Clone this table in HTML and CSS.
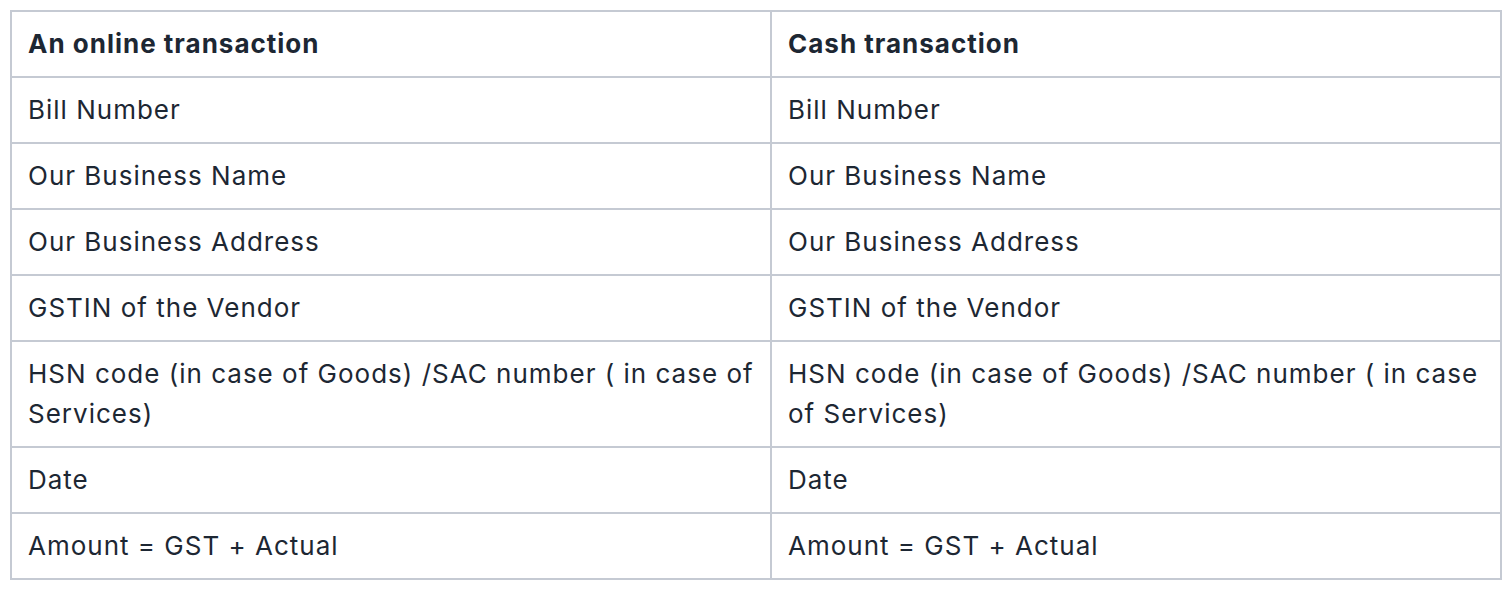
FILE: index.html
```html
<!DOCTYPE html>
<html>
<head>
<meta charset="utf-8">
<link rel="stylesheet" href="styles.css">
</head>
<body>
<table class="grid">
  <colgroup><col class="c1"><col class="c2"></colgroup>
  <thead>
    <tr><th>An online transaction</th><th>Cash transaction</th></tr>
  </thead>
  <tbody>
    <tr><td>Bill Number</td><td>Bill Number</td></tr>
    <tr><td>Our Business Name</td><td>Our Business Name</td></tr>
    <tr><td>Our Business Address</td><td>Our Business Address</td></tr>
    <tr><td>GSTIN of the Vendor</td><td>GSTIN of the Vendor</td></tr>
    <tr><td>HSN code (in case of Goods) /SAC number ( in case of Services)</td><td>HSN code (in case of Goods) /SAC number ( in case of Services)</td></tr>
    <tr><td>Date</td><td>Date</td></tr>
    <tr><td>Amount = GST + Actual</td><td>Amount = GST + Actual</td></tr>
  </tbody>
</table>
</body>
</html>
```
FILE: styles.css
```css
html, body { margin: 0; padding: 0; background: #fff; }
body { padding: 10px; font-family: Inter, "Noto Sans", sans-serif; color: #1d2733; }
.grid { border-collapse: collapse; width: 1490px; table-layout: fixed; }
.c1 { width: 760px; }
.c2 { width: 730px; }
.grid th, .grid td {
  border: 2px solid #c5cad3;
  padding: 12px 12px 12px 16px;
  font-size: 26px;
  line-height: 40px;
  letter-spacing: 1px;
  text-align: left;
  vertical-align: top;
}
.grid th { font-weight: 700; }
.grid td { font-weight: 400; }
```
